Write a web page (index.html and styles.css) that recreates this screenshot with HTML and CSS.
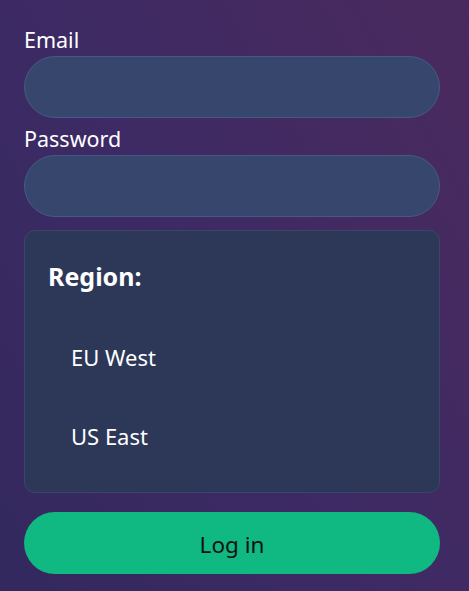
FILE: index.html
```html
<!DOCTYPE html>
<html lang="en">
<head>
<meta charset="utf-8">
<title>Login</title>
<link rel="stylesheet" href="styles.css">
</head>
<body>
<form class="form">
  <label class="label" for="email">Email</label>
  <input class="input" id="email" type="email">
  <label class="label label-gap" for="password">Password</label>
  <input class="input" id="password" type="password">
  <fieldset class="card">
    <div class="card-title">Region:</div>
    <div class="options">
      <div class="option">EU West</div>
      <div class="option">US East</div>
    </div>
  </fieldset>
  <button class="button" type="button">Log in</button>
</form>
</body>
</html>
```
FILE: styles.css
```css
html, body {
  margin: 0;
  height: 100%;
}
body {
  background: linear-gradient(60deg, #33295e 0%, #3d2a64 45%, #4a2a5e 100%);
  font-family: "Noto Sans", "Open Sans", sans-serif;
  color: #ffffff;
  overflow: hidden;
}
.form {
  display: flex;
  flex-direction: column;
  padding: 28px 29px 0 24px;
}
.label {
  font-size: 21.5px;
  line-height: 24px;
  height: 28px;
}
.label-gap {
  margin-top: 9px;
}
.input {
  box-sizing: border-box;
  height: 62px;
  border-radius: 31px;
  border: 1px solid #475887;
  background: #37466d;
  margin: 0;
  padding: 0 20px;
  font: inherit;
  color: #fff;
  outline: none;
}
.card {
  box-sizing: border-box;
  margin: 13px 0 0 0;
  height: 263px;
  border: 1px solid #3a4569;
  border-radius: 11px;
  background: #2d3757;
  padding: 31px 0 0 23px;
  min-width: 0;
}
.card-title {
  font-size: 25px;
  font-weight: 700;
  line-height: 28px;
}
.options {
  margin-top: 27px;
  display: flex;
  flex-direction: column;
}
.option {
  height: 79px;
  display: flex;
  align-items: center;
  padding-left: 23px;
  font-size: 22px;
}
.button {
  margin-top: 19px;
  height: 62px;
  border: none;
  border-radius: 31px;
  background: #10b981;
  color: #111111;
  font-family: inherit;
  font-size: 22.5px;
  padding: 3px 0 0;
}
```
